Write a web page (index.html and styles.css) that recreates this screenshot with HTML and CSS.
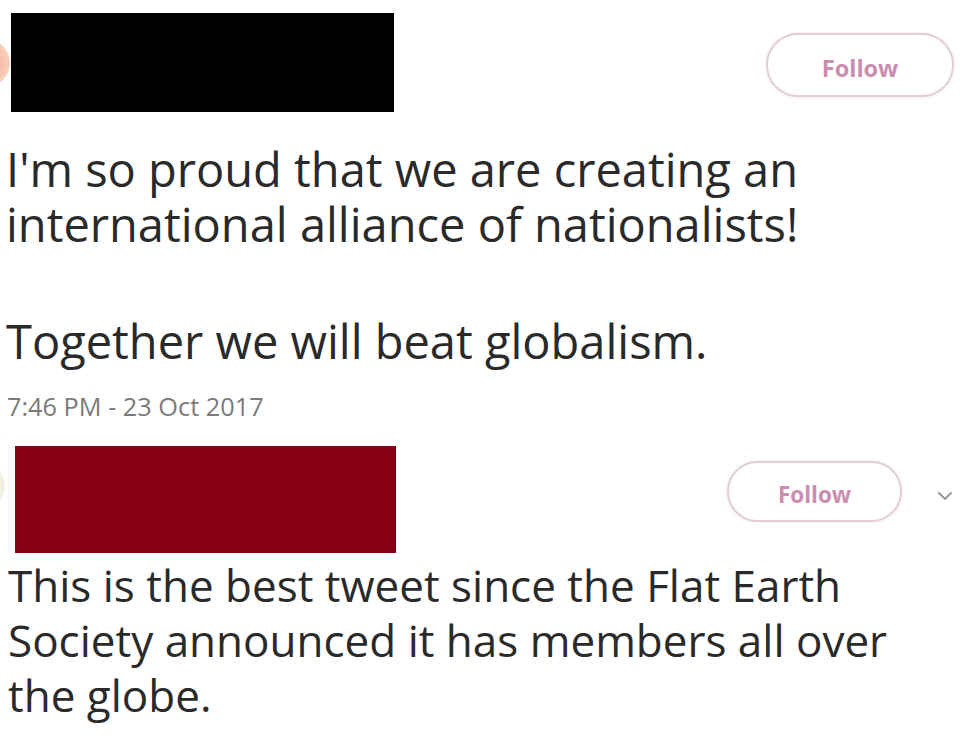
FILE: index.html
```html
<!DOCTYPE html>
<html lang="en">
<head>
<meta charset="utf-8">
<title>Tweets</title>
<link rel="stylesheet" href="styles.css">
</head>
<body>
<article class="tweet tweet-main">
  <header class="tweet-head head-main">
    <div class="avatar avatar-orange"></div>
    <div class="redact redact-black"></div>
    <button class="follow follow-lg">Follow</button>
  </header>
  <div class="tweet-text text-main">
    <p>I'm so proud that we are creating an<br>international alliance of nationalists!</p>
    <p>Together we will beat globalism.</p>
  </div>
  <div class="time">7:46 PM - 23 Oct 2017</div>
</article>
<article class="tweet tweet-reply">
  <header class="tweet-head head-reply">
    <div class="avatar avatar-pale"></div>
    <div class="redact redact-red"></div>
    <button class="follow follow-sm">Follow</button>
    <svg class="chevron" viewBox="0 0 18 10" width="18" height="10" aria-hidden="true"><polyline points="3,2 9,8 15,2" fill="none" stroke="#9a9a9a" stroke-width="2" stroke-linecap="round" stroke-linejoin="round"/></svg>
  </header>
  <div class="tweet-text text-reply">
    <p>This is the best tweet since the Flat Earth<br>Society announced it has members all over<br>the globe.</p>
  </div>
</article>
</body>
</html>
```
FILE: styles.css
```css
html, body {
  margin: 0;
  padding: 0;
  background: #ffffff;
}
body {
  width: 960px;
  height: 740px;
  overflow: hidden;
  font-family: "Open Sans", "Noto Sans", sans-serif;
  color: #2a2a2a;
}
.tweet-head {
  display: flex;
  align-items: flex-start;
}
.head-main {
  padding-top: 13px;
}
.head-reply {
  padding-top: 25px;
}
.avatar {
  flex: none;
  width: 48px;
  height: 48px;
  border-radius: 50%;
}
.avatar-orange {
  margin-left: -38px;
  margin-top: 26px;
  background: radial-gradient(circle at 60% 50%, #f2ad8e 0%, #f8d3c0 55%, #fdefe7 100%);
}
.avatar-pale {
  margin-left: -43px;
  margin-top: 16px;
  background: radial-gradient(circle at 70% 50%, #f6edc8 0%, #eef2f8 60%, #f8f9fb 100%);
}
.redact {
  flex: none;
}
.redact-black {
  width: 383px;
  height: 99px;
  margin-left: 1px;
  background: #000000;
}
.redact-red {
  width: 381px;
  height: 107px;
  margin-left: 10px;
  background: #870016;
}
.follow {
  flex: none;
  margin-left: auto;
  background: #ffffff;
  border: 2px solid #e3cdda;
  border-radius: 999px;
  color: #c98db0;
  font-family: "Open Sans", "Noto Sans", sans-serif;
  font-weight: 700;
  padding: 5px 0 0;
  box-shadow: 0 0 3px rgba(230, 200, 220, 0.5);
}
.follow-lg {
  width: 188px;
  height: 64px;
  margin-top: 20px;
  margin-right: 6px;
  font-size: 23.5px;
}
.follow-sm {
  width: 175px;
  height: 61px;
  margin-top: 15px;
  font-size: 22.5px;
}
.chevron {
  flex: none;
  margin-top: 45px;
  margin-left: 34px;
  margin-right: 6px;
}
.tweet-text p {
  margin: 0;
}
.text-main {
  padding-left: 6px;
  margin-top: 30px;
  font-size: 47px;
  line-height: 55px;
}
.text-main p + p {
  margin-top: 62px;
}
.time {
  padding-left: 7px;
  margin-top: 22px;
  font-size: 25.3px;
  line-height: 30px;
  color: #7b7b7b;
}
.text-reply {
  padding-left: 8px;
  margin-top: 5px;
  font-size: 44px;
  line-height: 55px;
}
```
